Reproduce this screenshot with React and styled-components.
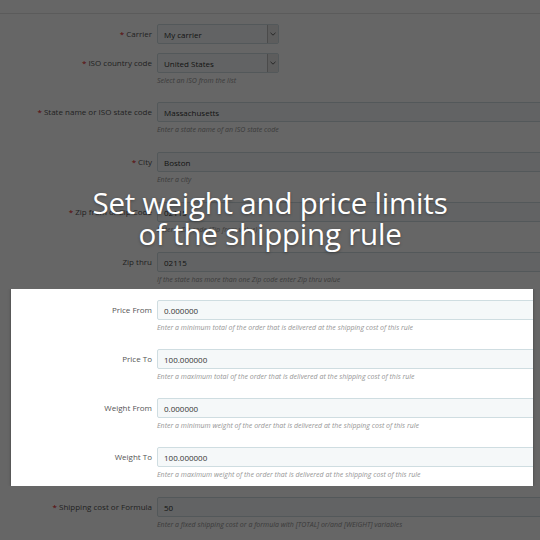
import styled, { createGlobalStyle } from "styled-components";

const GlobalStyle = createGlobalStyle`
  html, body {
    margin: 0;
    padding: 0;
    background: #fff;
  }
  body {
    font-family: "Open Sans", "Liberation Sans", sans-serif;
  }
`;

const Page = styled.div`
  position: relative;
  width: 540px;
  height: 540px;
  overflow: hidden;
  background: #fff;
`;

const Dim = styled.section`
  position: relative;
  height: ${(p) => p.$height || "auto"};
  padding: ${(p) => p.$padding || "0"};
  overflow: hidden;
  box-sizing: border-box;
  &::after {
    content: "";
    position: absolute;
    inset: 0;
    background: rgba(0, 0, 0, 0.6);
    z-index: 1;
  }
`;

const Divider = styled.hr`
  margin: 0 0 10px;
  border: 0;
  border-top: 1px solid #e4e4e4;
`;

const Panel = styled.div`
  position: relative;
  z-index: 2;
  height: 197px;
  box-sizing: border-box;
  padding-top: 11px;
  background: #fff;
  overflow: hidden;
  box-shadow: 0 0 3px rgba(0, 0, 0, 0.35);
`;

const Row = styled.div`
  display: grid;
  grid-template-columns: ${(p) => p.$labelWidth || "152px"} 1fr;
  column-gap: 5px;
  align-items: start;
  margin-bottom: ${(p) => p.$gap || "16px"};
`;

const Label = styled.label`
  text-align: right;
  font-size: 8px;
  line-height: 20px;
  color: #555;
  white-space: nowrap;
`;

const Req = styled.span`
  color: #e00b0b;
  margin-right: 2px;
`;

const Input = styled.div`
  height: 20px;
  box-sizing: border-box;
  display: flex;
  align-items: center;
  padding-left: 6px;
  margin-right: -6px;
  width: ${(p) => p.$width || "auto"};
  font-size: 8px;
  color: #333;
  background: #f5f8f9;
  border: 1px solid #cfdde1;
  border-radius: 2px;
`;

const Select = styled(Input)`
  margin-right: 0;
  padding-right: 0;
  justify-content: space-between;
`;

const Chevron = styled.span`
  width: 10px;
  height: 100%;
  display: flex;
  align-items: center;
  justify-content: center;
  border-left: 1px solid #bbb;
  background: #e8e8e8;
`;

const Help = styled.div`
  margin-top: 2px;
  font-size: 7px;
  line-height: 12px;
  font-style: italic;
  color: #959595;
  white-space: nowrap;
`;

const Title = styled.h1`
  position: absolute;
  top: 187px;
  left: 0;
  right: 0;
  margin: 0;
  z-index: 3;
  text-align: center;
  font-family: "Open Sans", "Liberation Sans", sans-serif;
  font-weight: 400;
  font-size: 29.5px;
  line-height: 31px;
  letter-spacing: -0.2px;
  color: #fff;
  text-shadow: 0 1px 3px rgba(0, 0, 0, 0.35);
`;

function Field({ label, required, value, help, select, labelWidth, gap }) {
  return (
    <Row $labelWidth={labelWidth} $gap={gap}>
      <Label>
        {required && <Req>*</Req>}
        {label}
      </Label>
      <div>
        {select ? (
          <Select $width="122px">
            {value}
            <Chevron>
              <svg width="6" height="4" viewBox="0 0 6 4">
                <path d="M0.5 0.8 L3 3.2 L5.5 0.8" fill="none" stroke="#555" strokeWidth="0.9" />
              </svg>
            </Chevron>
          </Select>
        ) : (
          <Input>{value}</Input>
        )}
        {help && <Help>{help}</Help>}
      </div>
    </Row>
  );
}

const tail = "that is delivered at the shipping cost of this rule";

export default function App() {
  return (
    <Page>
      <GlobalStyle />
      <Dim $height="289px" $padding="13px 0 0">
        <Divider />
        <Field label="Carrier" required value="My carrier" select gap="9px" />
        <Field label="ISO country code" required value="United States" select help="Select an ISO from the list" gap="15px" />
        <Field label="State name or ISO state code" required value="Massachusetts" help="Enter a state name of an ISO state code" />
        <Field label="City" required value="Boston" help="Enter a city" />
        <Field label="Zip from or Zip Code" required value="02115" help="Enter a Zip code (Zip from value)" />
        <Field label="Zip thru" value="02115" help="If the state has more than one Zip code enter Zip thru value" />
      </Dim>
      <Dim $padding="0 7px 0 11px">
        <Panel>
          <Field labelWidth="141px" gap="15px" label="Price From" value="0.000000" help={`Enter a minimum total of the order ${tail}`} />
          <Field labelWidth="141px" gap="15px" label="Price To" value="100.000000" help={`Enter a maximum total of the order ${tail}`} />
          <Field labelWidth="141px" gap="15px" label="Weight From" value="0.000000" help={`Enter a minimum weight of the order ${tail}`} />
          <Field labelWidth="141px" gap="15px" label="Weight To" value="100.000000" help={`Enter a maximum weight of the order ${tail}`} />
        </Panel>
      </Dim>
      <Dim $height="54px" $padding="11px 0 0">
        <Field label="Shipping cost or Formula" required value="50" help="Enter a fixed shipping cost or a formula with [TOTAL] or/and [WEIGHT] variables" />
      </Dim>
      <Title>
        Set weight and price limits
        <br />
        of the shipping rule
      </Title>
    </Page>
  );
}
